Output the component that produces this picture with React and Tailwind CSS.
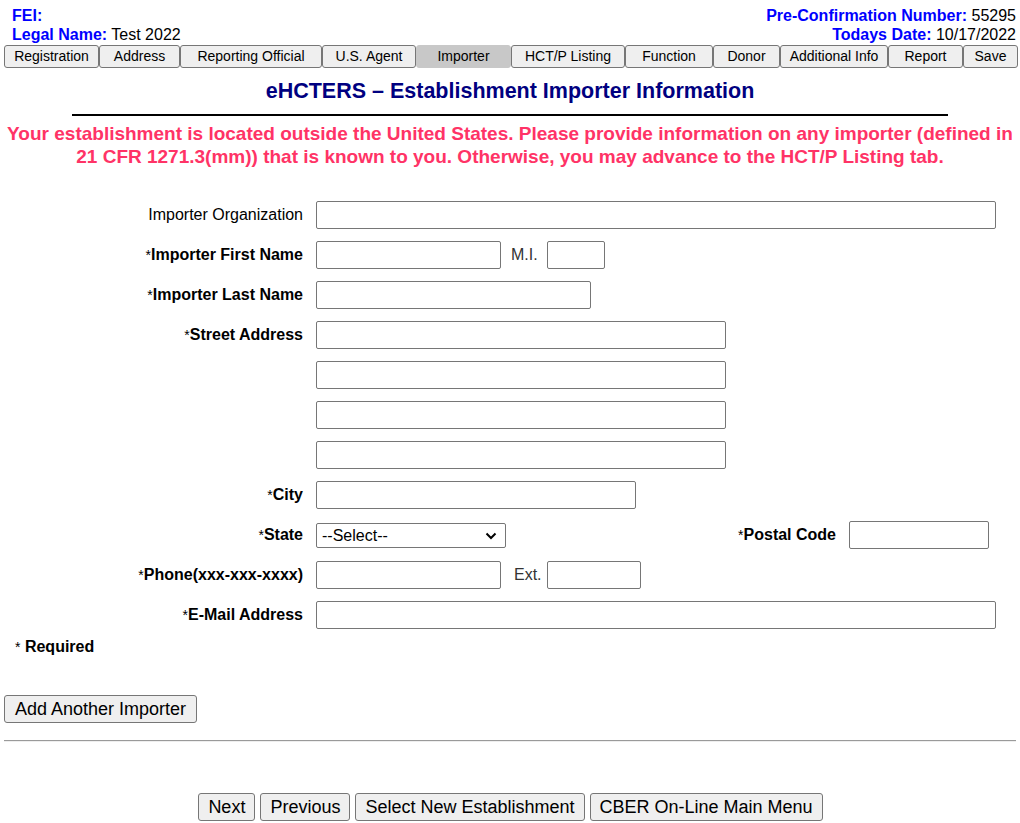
import { useState } from "react";

const tabs = [
    ["Registration", 95],
    ["Address", 81],
    ["Reporting Official", 142],
    ["U.S. Agent", 94],
    ["Importer", 95],
    ["HCT/P Listing", 114],
    ["Function", 88],
    ["Donor", 67],
    ["Additional Info", 108],
    ["Report", 75],
    ["Save", 55],
];

const inputCls = "h-[28px] border border-[#767676] rounded-[2px] bg-white";

function Label({ req, children }) {
    return (
        <div className="w-[303px] shrink-0 text-right text-[16px] text-black">
            {req ? (
                <>
                    <span className="text-[14px]">*</span>
                    <span className="font-bold">{children}</span>
                </>
            ) : (
                children
            )}
        </div>
    );
}

function Row({ label, req, children }) {
    return (
        <div className="h-[40px] flex items-center">
            <Label req={req}>{label}</Label>
            <div className="ml-[13px] flex items-center">{children}</div>
        </div>
    );
}

export default function App() {
    const [state, setState] = useState("");

    return (
        <div className="w-[1020px] h-[823px] bg-white text-black overflow-hidden font-['Liberation_Sans',Arial,sans-serif]">
            <div className="flex justify-between px-[12px] pt-[6px] pr-[4px] text-[16px] leading-[19px]">
                <div>
                    <div className="font-bold text-[#0000ff]">FEI:</div>
                    <div>
                        <span className="font-bold text-[#0000ff]">Legal Name:</span> Test 2022
                    </div>
                </div>
                <div className="text-right">
                    <div>
                        <span className="font-bold text-[#0000ff]">Pre-Confirmation Number:</span> 55295
                    </div>
                    <div>
                        <span className="font-bold text-[#0000ff]">Todays Date:</span> 10/17/2022
                    </div>
                </div>
            </div>

            <div className="flex pl-[4px] mt-[1px]">
                {tabs.map(([t, w]) => (
                    <button
                        key={t}
                        style={{ width: w }}
                        className={
                            "h-[23px] text-[14px] border border-[#767676] rounded-[3px] text-black " +
                            (t === "Importer" ? "bg-[#c8c8c8] border-[#c8c8c8]" : "bg-[#efefef]")
                        }
                    >
                        {t}
                    </button>
                ))}
            </div>

            <h1 className="text-center text-[21.5px] font-bold text-[#000080] mt-[10px] leading-[26px]">
                eHCTERS – Establishment Importer Information
            </h1>
            <div className="mx-[72px] mt-[10px] h-[2px] bg-black"></div>
            <p className="text-center font-bold text-[#ff3366] text-[19px] leading-[23px] mt-[6px] px-[6px]">
                Your establishment is located outside the United States. Please provide information on any importer (defined in 21 CFR 1271.3(mm)) that is known to you. Otherwise, you may advance to the HCT/P Listing tab.
            </p>

            <div className="mt-[27px]">
                <Row label="Importer Organization">
                    <input className={inputCls + " w-[680px]"} />
                </Row>
                <Row label="Importer First Name" req>
                    <input className={inputCls + " w-[185px]"} />
                    <span className="ml-[10px] text-[16px] text-[#333]">M.I.</span>
                    <input className={inputCls + " ml-[9px] w-[58px]"} />
                </Row>
                <Row label="Importer Last Name" req>
                    <input className={inputCls + " w-[275px]"} />
                </Row>
                <Row label="Street Address" req>
                    <input className={inputCls + " w-[410px]"} />
                </Row>
                <Row label="">
                    <input className={inputCls + " w-[410px]"} />
                </Row>
                <Row label="">
                    <input className={inputCls + " w-[410px]"} />
                </Row>
                <Row label="">
                    <input className={inputCls + " w-[410px]"} />
                </Row>
                <Row label="City" req>
                    <input className={inputCls + " w-[320px]"} />
                </Row>
                <div className="h-[40px] flex items-center">
                    <Label req>State</Label>
                    <div className="ml-[13px] flex items-center w-[673px]">
                        <div className="relative">
                            <select
                                value={state}
                                onChange={(e) => setState(e.target.value)}
                                className="appearance-none h-[25px] w-[190px] border border-[#767676] rounded-[2px] bg-white text-[16px] pl-[5px] pr-[20px]"
                            >
                                <option value="">--Select--</option>
                            </select>
                            <svg
                                className="absolute right-[9px] top-[9px] pointer-events-none"
                                width="12"
                                height="8"
                                viewBox="0 0 12 8"
                            >
                                <path d="M1.5 1.5 L6 6 L10.5 1.5" fill="none" stroke="#000" strokeWidth="2" />
                            </svg>
                        </div>
                        <div className="flex-1 text-right text-[16px]">
                            <span className="text-[14px]">*</span>
                            <span className="font-bold">Postal Code</span>
                        </div>
                        <input className={inputCls + " ml-[13px] w-[140px]"} />
                    </div>
                </div>
                <Row label="Phone(xxx-xxx-xxxx)" req>
                    <input className={inputCls + " w-[185px]"} />
                    <span className="ml-[13px] text-[16px] text-[#333]">Ext.</span>
                    <input className={inputCls + " ml-[5px] w-[94px]"} />
                </Row>
                <Row label="E-Mail Address" req>
                    <input className={inputCls + " w-[680px]"} />
                </Row>
            </div>

            <div className="pl-[15px] text-[16px]">
                <span className="text-[14px]">*</span> <span className="font-bold">Required</span>
            </div>

            <div className="pl-[4px] mt-[36px]">
                <button className="h-[28px] px-[10px] text-[18px] border border-[#767676] rounded-[3px] bg-[#efefef]">
                    Add Another Importer
                </button>
            </div>

            <div className="mx-[4px] mt-[17px] h-[2px] border-t border-[#9a9a9a] border-b border-b-[#eeeeee]"></div>

            <div className="flex justify-center gap-[5px] mt-[51px] pl-[1px]">
                {["Next", "Previous", "Select New Establishment", "CBER On-Line Main Menu"].map((b) => (
                    <button
                        key={b}
                        className="h-[28px] px-[9px] text-[18px] border border-[#767676] rounded-[3px] bg-[#efefef]"
                    >
                        {b}
                    </button>
                ))}
            </div>
        </div>
    );
}
